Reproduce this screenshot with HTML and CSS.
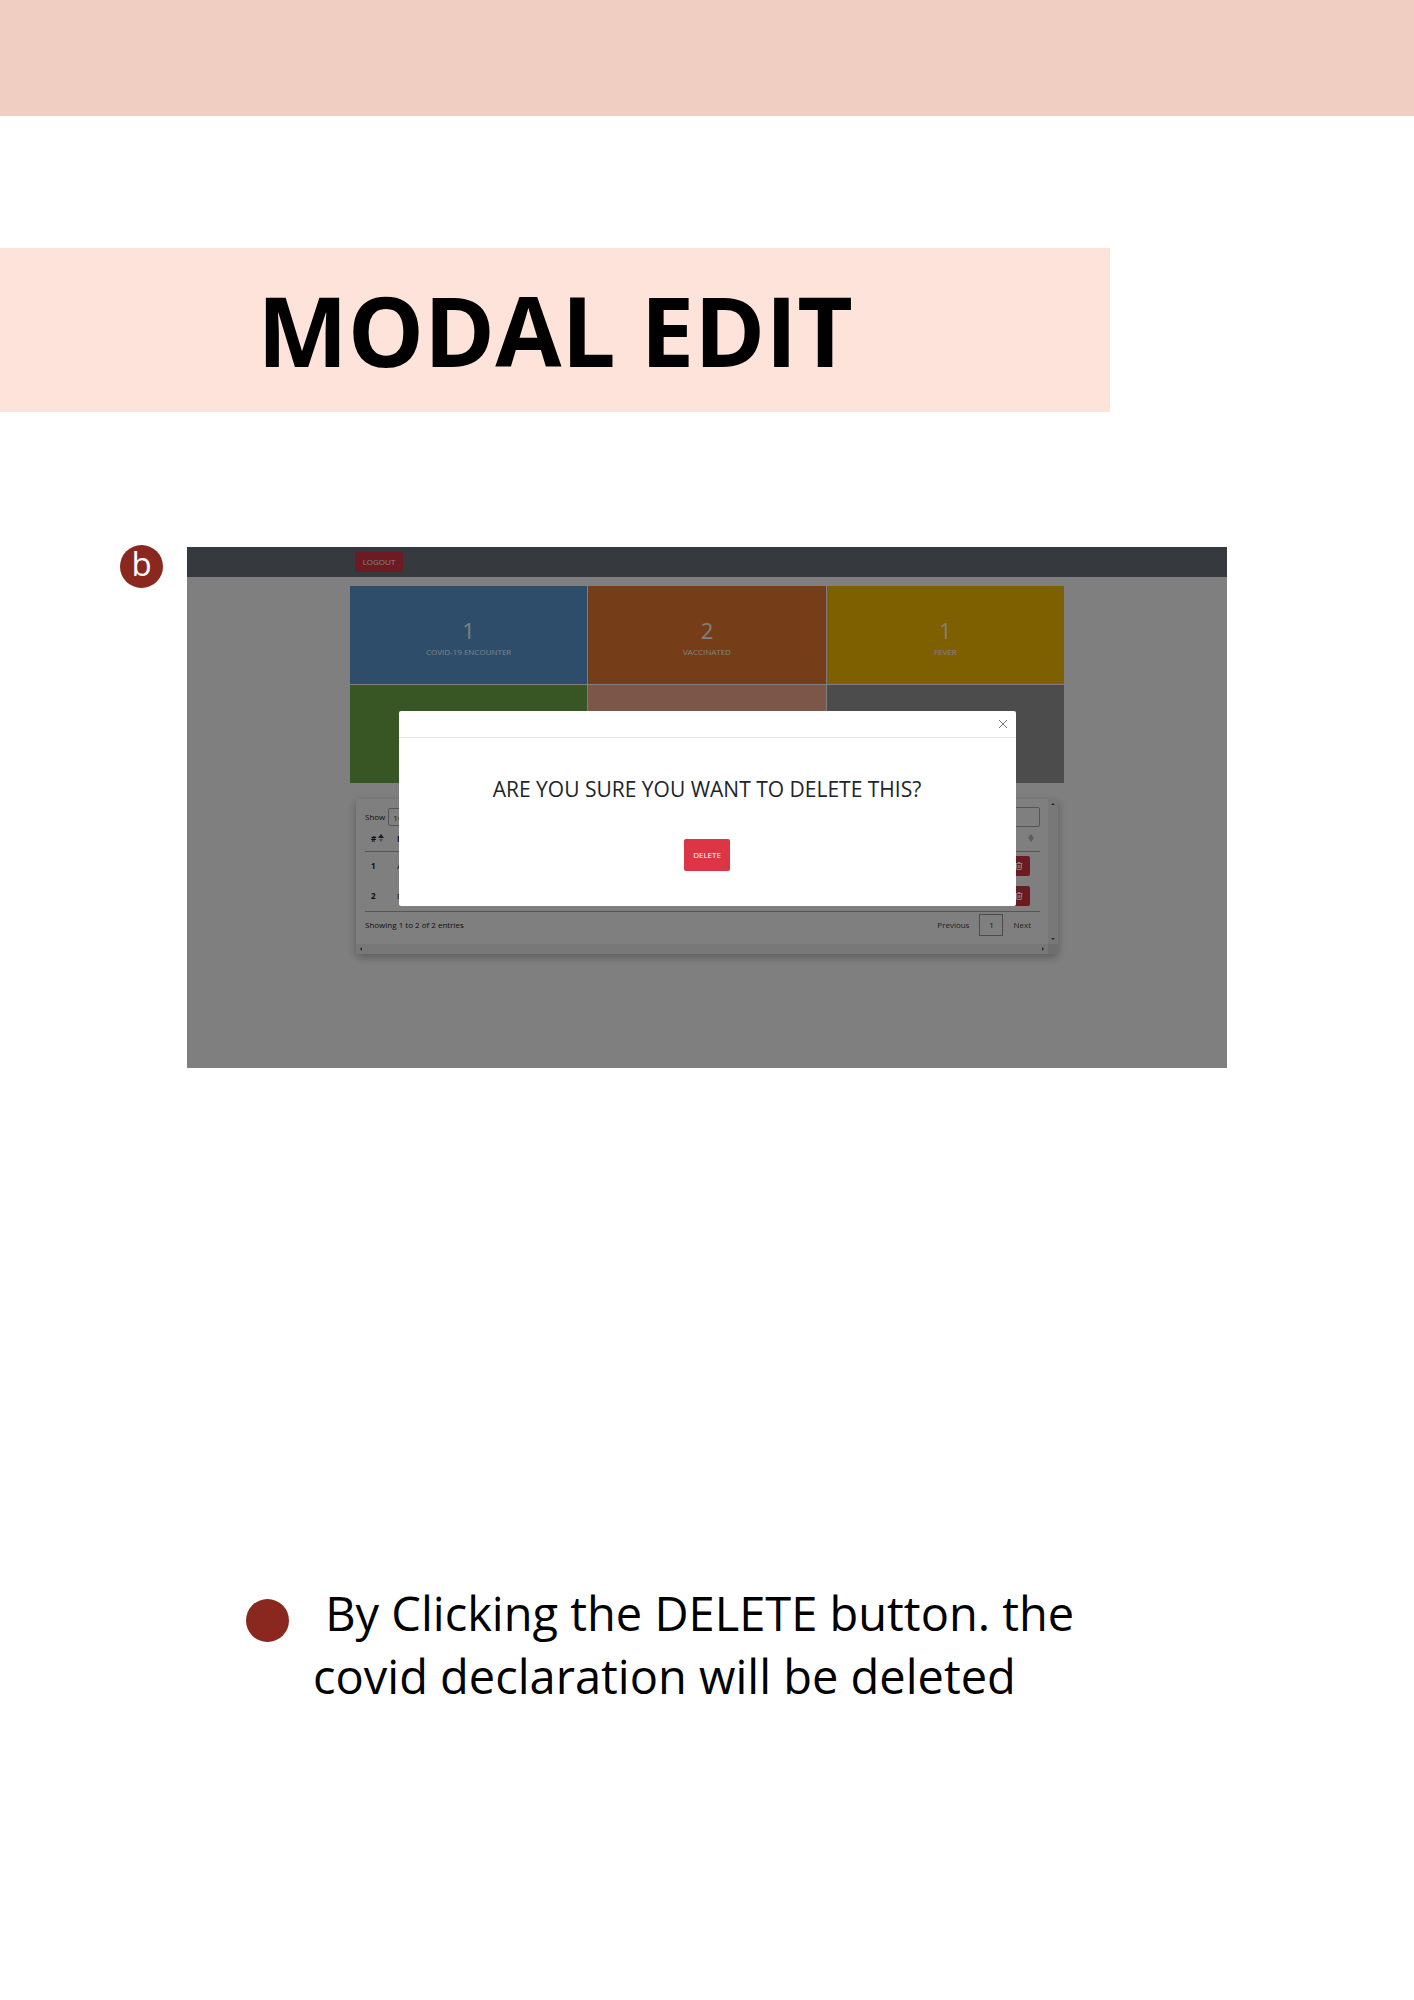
FILE: index.html
```html
<!DOCTYPE html>
<html lang="en">
<head>
<meta charset="utf-8">
<meta name="viewport" content="width=device-width, initial-scale=1">
<title>Modal Edit</title>
<link rel="stylesheet" href="styles.css">
</head>
<body>
<header class="top-band"></header>
<main>
  <h1 class="banner">MODAL EDIT</h1>

  <section class="figure">
    <span class="marker">b</span>
    <div class="app">
      <nav class="navbar"><button class="btn logout" type="button">LOGOUT</button></nav>
      <div class="content">
        <div class="tiles">
          <div class="tile blue"><span class="count">1</span><span>COVID-19 ENCOUNTER</span></div>
          <div class="tile orange"><span class="count">2</span><span>VACCINATED</span></div>
          <div class="tile yellow"><span class="count">1</span><span>FEVER</span></div>
          <div class="tile green"></div>
          <div class="tile salmon"></div>
          <div class="tile grey"></div>
        </div>
        <div class="card">
          <div class="card-body">
            <div class="controls">
              <label class="length">Show <select><option>10</option></select></label>
              <input class="search" type="search" aria-label="Search">
            </div>
            <table class="records">
              <thead>
                <tr>
                  <th class="num"># <svg class="sort" viewBox="0 0 6 8"><path d="M3 0L6 4H0Z" fill="#333"/><path d="M3 8L1 5H5Z" fill="#999"/></svg></th>
                  <th>N</th>
                  <th class="action"><svg class="sort" viewBox="0 0 6 8"><path d="M3 0L6 4L3 8L0 4Z" fill="#bbb"/></svg></th>
                </tr>
              </thead>
              <tbody>
                <tr>
                  <th class="num">1</th><td>A</td>
                  <td class="action"><button class="btn trash" type="button" aria-label="Delete record 1"><svg viewBox="0 0 8 8"><path d="M.5 1.5H7.500M3 1.500V.5H5V1.500M1.300 1.500L1.800 7.500H6.200L6.700 1.500M3.200 3V6M4.800 3V6"/></svg></button></td>
                </tr>
                <tr>
                  <th class="num">2</th><td>E</td>
                  <td class="action"><button class="btn trash" type="button" aria-label="Delete record 2"><svg viewBox="0 0 8 8"><path d="M.5 1.5H7.500M3 1.500V.5H5V1.500M1.300 1.500L1.800 7.500H6.200L6.700 1.500M3.200 3V6M4.800 3V6"/></svg></button></td>
                </tr>
              </tbody>
            </table>
            <div class="footer">
              <span>Showing 1 to 2 of 2 entries</span>
              <div class="pager"><a href="#">Previous</a><a class="current" href="#">1</a><a href="#">Next</a></div>
            </div>
          </div>
          <div class="bar vertical"><i class="arrow up"></i><i class="arrow down"></i></div>
          <div class="bar horizontal"><i class="arrow left"></i><i class="arrow right"></i></div>
          <div class="corner"></div>
        </div>
      </div>
      <div class="backdrop">
        <div class="modal" role="dialog" aria-labelledby="question">
          <div class="modal-header">
            <button class="close" type="button" aria-label="Close"><svg viewBox="0 0 10 10"><path d="M1 1L9 9M9 1L1 9"/></svg></button>
          </div>
          <div class="modal-body">
            <h2 id="question">ARE YOU SURE YOU WANT TO DELETE THIS?</h2>
            <button class="btn delete" type="button">DELETE</button>
          </div>
        </div>
      </div>
    </div>
  </section>

  <section class="note">
    <span class="marker"></span>
    <p> By Clicking the DELETE button. the
covid declaration will be deleted</p>
  </section>
</main>
</body>
</html>
```
FILE: styles.css
```css
* { box-sizing: border-box; }

body {
  margin: 0;
  background: #fff;
  color: #000;
  font-family: "Open Sans", "Noto Sans", sans-serif;
}

button, select, input { font: inherit; }

.top-band { height: 116px; background: #f0cfc2; }

.banner {
  width: 78.5%;
  margin: 132px 0 0;
  padding: 16px 0;
  background: #fee3da;
  font-size: 96px;
  font-weight: 700;
  line-height: 132px;
  text-align: center;
}

.figure {
  display: flex;
  align-items: flex-start;
  gap: 24px;
  margin-top: 133px;
  padding: 0 187px 0 120px;
}

.marker {
  flex: none;
  width: 43px;
  height: 43px;
  border-radius: 50%;
  background: #8a2820;
  color: #fff;
  font-size: 33px;
  line-height: 38px;
  text-align: center;
}

.app {
  position: relative;
  flex: 1;
  margin-top: 2px;
  padding-bottom: 114px;
  background: #fff;
  color: #212529;
  font-size: 8px;
  line-height: 12px;
}

.navbar {
  display: flex;
  align-items: center;
  height: 30px;
  padding-left: 168px;
  background: #6c757d;
}

.btn {
  border: 0;
  border-radius: 2px;
  background: #dc3545;
  color: #fff;
  text-align: center;
}

.logout { width: 48px; height: 20px; padding: 0; }

.content { padding: 9px 163px 0; }

.tiles {
  display: grid;
  grid-template-columns: repeat(3, 1fr);
  gap: 1px;
}

.tile {
  display: flex;
  flex-direction: column;
  align-items: center;
  justify-content: center;
  gap: 3px;
  height: 98px;
  padding-top: 4px;
  color: #fff;
}

.count { font-size: 22px; line-height: 26px; }
.blue { background: #5b9bd5; }
.orange { background: #ed7d31; }
.yellow { background: #ffc000; }
.green { background: #70ad47; }
.salmon { background: #f8ac93; }
.grey { background: #999; }

.card {
  display: grid;
  grid-template-columns: 1fr 10px;
  grid-template-rows: 1fr 10px;
  margin: 16px 6px 0;
  border-radius: 2px;
  background: #fff;
  box-shadow: 0 3px 8px rgba(0, 0, 0, .3);
}

.card-body { padding: 8px 8px 8px 9px; }

.controls { display: flex; justify-content: space-between; }
.length { display: flex; align-items: center; gap: 3px; }

.length select {
  width: 40px;
  height: 18px;
  padding: 0;
  border: 1px solid #aaa;
  border-radius: 2px;
  background: #fff;
  color: #333;
}

.search {
  width: 120px;
  height: 20px;
  border: 1px solid #aaa;
  border-radius: 2px;
  background: #fff;
}

.records { width: 100%; border-collapse: collapse; border-bottom: 1px solid #aaa; text-align: left; }
.records th, .records td { height: 30px; padding: 0 6px; vertical-align: middle; }
.records thead th { height: 24px; border-bottom: 1px solid #aaa; }
.records .num { width: 26px; white-space: nowrap; }
.records .action { padding-right: 10px; text-align: right; }
.records thead .action { padding-right: 6px; }
.sort { width: 6px; height: 8px; }

.trash { display: inline-flex; align-items: center; justify-content: center; width: 22px; height: 20px; padding: 0; vertical-align: middle; }
.trash svg { width: 8px; height: 8px; fill: none; stroke: #fff; }

.footer { display: flex; align-items: center; justify-content: space-between; padding-top: 2px; }
.pager { display: flex; align-items: center; gap: 10px; padding-right: 9px; }
.pager a { color: #444; text-decoration: none; }
.pager .current { width: 24px; border: 1px solid #999; color: #333; line-height: 20px; text-align: center; }

.bar { display: flex; align-items: center; justify-content: space-between; padding: 4px; background: #f1f1f1; }
.vertical { flex-direction: column; }
.corner { background: #dcdcdc; }
.arrow { border: 2px solid transparent; }
.up { border-top: 0; border-bottom-color: #555; }
.down { border-bottom: 0; border-top-color: #555; }
.left { border-left: 0; border-right-color: #555; }
.right { border-right: 0; border-left-color: #555; }

.backdrop {
  position: absolute;
  inset: 0;
  display: flex;
  align-items: flex-start;
  justify-content: center;
  padding-top: 164px;
  background: rgba(0, 0, 0, .5);
}

.modal { width: 617px; border-radius: 2px; background: #fff; }

.modal-header {
  display: flex;
  align-items: center;
  justify-content: flex-end;
  height: 27px;
  padding: 0 8px;
  border-bottom: 1px solid #e4e7ea;
}

.close { display: flex; padding: 0; border: 0; background: none; }
.close svg { width: 10px; height: 10px; fill: none; stroke: #777; }

.modal-body {
  display: flex;
  flex-direction: column;
  align-items: center;
  gap: 36px;
  padding: 37px 0 35px;
}

.modal-body h2 { margin: 0; font-size: 21px; font-weight: 400; line-height: 28px; }
.delete { width: 46px; height: 32px; padding: 0; }

.note {
  display: flex;
  gap: 24px;
  margin-top: 514px;
  padding: 0 246px;
}

.note .marker { margin-top: 17px; }

.note p {
  margin: 0;
  padding-bottom: 240px;
  font-size: 47px;
  line-height: 63px;
  white-space: pre;
}
```
